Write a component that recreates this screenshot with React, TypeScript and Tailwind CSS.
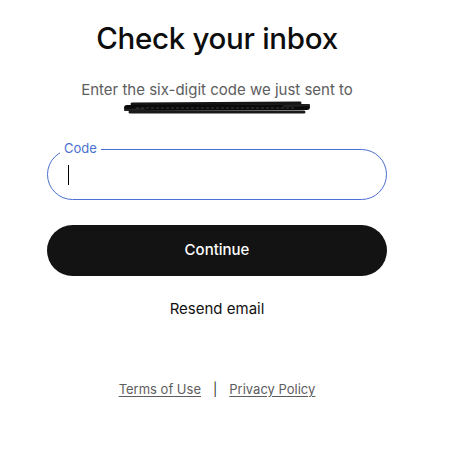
import { useState } from "react";

const Redacted = () => (
  <svg width="186" height="16" viewBox="0 0 186 16" className="block">
    <path d="M8 4 L176 3" stroke="#151515" strokeWidth="3" strokeLinecap="round" />
    <path d="M3 8 L183 7" stroke="#0a0a0a" strokeWidth="6" strokeLinecap="round" />
    <path d="M6 12 L180 12" stroke="#1a1a1a" strokeWidth="3" strokeLinecap="round" />
    <path d="M1 10 L20 9 M160 6 L185 5" stroke="#222" strokeWidth="2" strokeLinecap="round" />
    <path d="M12 8 L170 8" stroke="#3a3a3a" strokeWidth="1" strokeDasharray="3 2" />
  </svg>
);

const App = () => {
  const [code, setCode] = useState<string>("");

  return (
    <main
      className="min-h-screen w-full bg-white text-[#0d0d0d]"
      style={{ fontFamily: "Inter, 'Liberation Sans', sans-serif" }}
    >
      <div className="flex w-[434px] flex-col items-center pt-[20px]">
        <h1 className="text-[29.5px] font-medium leading-[36px] tracking-[-0.3px]">
          Check your inbox
        </h1>
        <p className="mt-[24px] text-[15px] leading-[20px] text-[#5d5d5d]">
          Enter the six-digit code we just sent to
        </p>
        <div className="mt-0 ml-[-1px]">
          <Redacted />
        </div>

        <div className="relative mt-[33px] w-[340px]">
          <label className="absolute left-[13px] top-[-9px] bg-white px-[4px] text-[13px] leading-[16px] text-[#4a6fd0]">
            Code
          </label>
          <div className="flex h-[51px] items-center rounded-full border border-[#4a6fd0] px-[20px]">
            <span className="h-[20px] w-[1px] bg-black" />
            <input
              className="w-full bg-transparent text-[16px] outline-none"
              value={code}
              onChange={(e) => setCode(e.target.value)}
            />
          </div>
        </div>

        <button className="mt-[25px] h-[51px] w-[340px] rounded-full bg-[#131313] text-[15px] font-medium text-white">
          Continue
        </button>

        <button className="mt-[23px] text-[15px] leading-[20px] text-[#111]">
          Resend email
        </button>

        <div className="mt-[61px] flex items-center gap-[12px] text-[13px] leading-[18px] text-[#5d5d5d]">
          <a className="underline underline-offset-2">Terms of Use</a>
          <span className="text-[#333]">|</span>
          <a className="underline underline-offset-2">Privacy Policy</a>
        </div>
      </div>
    </main>
  );
};

export default App;
